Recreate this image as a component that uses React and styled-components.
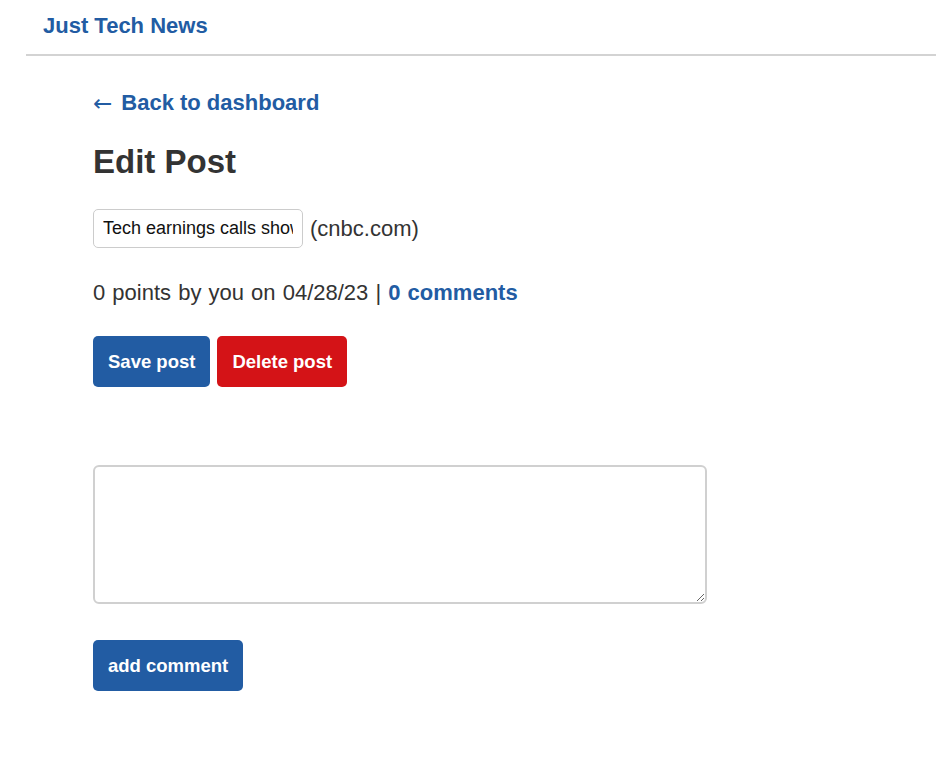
import styled, { createGlobalStyle } from "styled-components";

const GlobalStyle = createGlobalStyle`
  body {
    margin: 0;
    font-family: "Liberation Sans", Arial, sans-serif;
    color: #333;
    background: #fff;
  }
`;

const blue = "#225ca3";
const red = "#d41317";

const Header = styled.header`
  margin-left: 26px;
  border-bottom: 2px solid #d3d3d3;
  padding: 13px 0 15px 17px;
`;

const Brand = styled.a`
  font-size: 22px;
  font-weight: 700;
  color: ${blue};
  text-decoration: none;
  line-height: 26px;
`;

const Main = styled.main`
  padding: 34px 0 0 93px;
`;

const BackLink = styled.a`
  display: inline-flex;
  align-items: center;
  gap: 9px;
  font-size: 22px;
  font-weight: 700;
  color: ${blue};
  text-decoration: none;
  line-height: 26px;
`;

const Arrow = styled.span`
  font-family: "DejaVu Sans", sans-serif;
  font-weight: 400;
  font-size: 23px;
`;

const Title = styled.h1`
  font-size: 33px;
  font-weight: 700;
  color: #333;
  margin: 28px 0 29px;
  line-height: 36px;
`;

const TitleRow = styled.div`
  display: flex;
  align-items: center;
  gap: 7px;
  font-size: 22px;
`;

const TitleInput = styled.input`
  width: 210px;
  height: 39px;
  box-sizing: border-box;
  border: 1px solid #ccc;
  border-radius: 5px;
  padding: 0 9px;
  font-family: "Liberation Sans", Arial, sans-serif;
  font-size: 18px;
  color: #111;
`;

const Meta = styled.p`
  font-size: 22px;
  margin: 32px 0 0;
  line-height: 26px;
  word-spacing: 1px;
`;

const MetaLink = styled.a`
  color: ${blue};
  font-weight: 700;
  text-decoration: none;
`;

const Actions = styled.div`
  display: flex;
  gap: 7px;
  margin-top: 30px;
`;

const Button = styled.button`
  height: 51px;
  padding: 0 15px;
  border: none;
  border-radius: 5px;
  background: ${(p) => (p.$danger ? red : blue)};
  color: #fff;
  font-family: "Liberation Sans", Arial, sans-serif;
  font-size: 18.5px;
  font-weight: 700;
  cursor: pointer;
`;

const CommentForm = styled.form`
  margin-top: 78px;
  display: flex;
  flex-direction: column;
  align-items: flex-start;
  gap: 36px;
`;

const CommentBox = styled.textarea`
  width: 614px;
  height: 139px;
  box-sizing: border-box;
  border: 2px solid #d0d0d0;
  border-radius: 6px;
  font-family: "Liberation Sans", Arial, sans-serif;
  font-size: 16px;
  padding: 8px;
  margin: 0;
`;

export default function App() {
  return (
    <>
      <GlobalStyle />
      <Header>
        <Brand href="#">Just Tech News</Brand>
      </Header>
      <Main>
        <BackLink href="#">
          <Arrow>←</Arrow>
          Back to dashboard
        </BackLink>
        <Title>Edit Post</Title>
        <TitleRow>
          <TitleInput defaultValue="Tech earnings calls show AI is the new buzzword" />
          <span>(cnbc.com)</span>
        </TitleRow>
        <Meta>
          0 points by you on 04/28/23 | <MetaLink href="#">0 comments</MetaLink>
        </Meta>
        <Actions>
          <Button type="button">Save post</Button>
          <Button type="button" $danger>
            Delete post
          </Button>
        </Actions>
        <CommentForm onSubmit={(e) => e.preventDefault()}>
          <CommentBox />
          <Button type="submit">add comment</Button>
        </CommentForm>
      </Main>
    </>
  );
}
